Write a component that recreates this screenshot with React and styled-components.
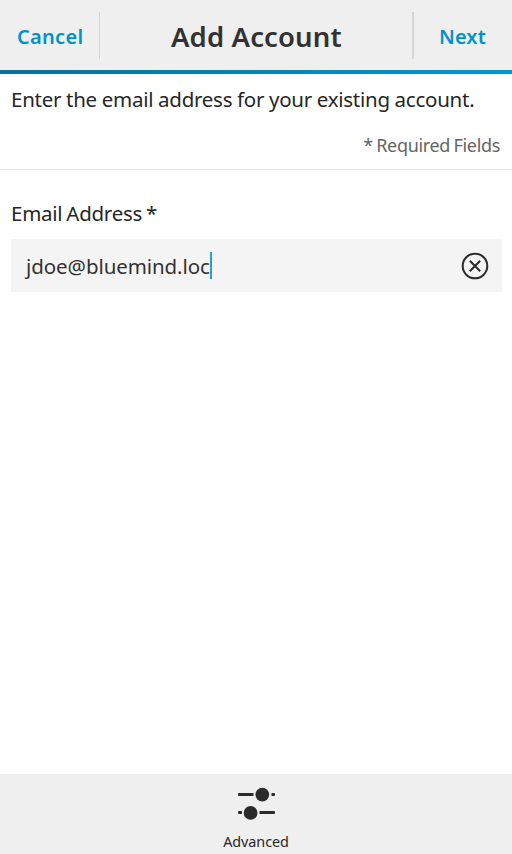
import React from "react";
import styled, { createGlobalStyle } from "styled-components";

const GlobalStyle = createGlobalStyle`
  * { box-sizing: border-box; }
  body {
    margin: 0;
    background: #fff;
    color: #262626;
    font-family: "Noto Sans", "Open Sans", sans-serif;
  }
`;

const Screen = styled.div`
  display: flex;
  flex-direction: column;
  height: 854px;
  width: 512px;
  overflow: hidden;
`;

const TitleBar = styled.header`
  display: grid;
  grid-template-columns: 99px 1px 312px 2px 98px;
  align-items: center;
  height: 70px;
  background: #efefef;
`;

const Divider = styled.span`
  height: 47px;
  background: #d5d5d5;
`;

const BarButton = styled.button`
  border: 0;
  padding: 4px 0 0 ${(p) => p.$inset}px;
  background: none;
  color: #0092cc;
  font: 600 20px/28px "Noto Sans", sans-serif;
  letter-spacing: ${(p) => p.$spacing}px;
  text-align: left;
  white-space: nowrap;
`;

const Title = styled.h1`
  margin: 0;
  padding: 4px 0 0 71px;
  color: #323232;
  font-size: 27.5px;
  font-weight: 600;
  line-height: 36px;
  letter-spacing: 0.12px;
  white-space: nowrap;
`;

const Accent = styled.div`
  height: 4px;
  background: linear-gradient(90deg, #087099, #0098d4);
`;

const Intro = styled.section`
  height: 96px;
  padding: 10px 12px 0 11px;
  border-bottom: 1px solid #e2e2e2;
`;

const Message = styled.p`
  margin: 0;
  font-size: 20.5px;
  line-height: 30px;
  letter-spacing: -0.25px;
  word-spacing: -0.3px;
  white-space: nowrap;
`;

const Required = styled.p`
  margin: 18px 0 0;
  color: #646464;
  font-size: 18px;
  line-height: 26px;
  letter-spacing: -0.34px;
  word-spacing: -0.8px;
  text-align: right;
`;

const Form = styled.main`
  flex: 1;
  padding: 28px 10px 0 11px;
`;

const Label = styled.label`
  display: block;
  height: 41px;
  font-size: 20.5px;
  line-height: 30px;
  letter-spacing: -0.27px;
  word-spacing: -1px;
`;

const Field = styled.div`
  display: flex;
  align-items: center;
  height: 53px;
  padding: 0 13px 0 15px;
  background: #f4f4f4;
`;

const Value = styled.span`
  color: #323232;
  font-size: 20.5px;
  line-height: 30px;
  letter-spacing: -0.08px;
`;

const Caret = styled.span`
  width: 2px;
  height: 27px;
  background: #2a9fd2;
`;

const ClearButton = styled.button`
  display: flex;
  margin-left: auto;
  padding: 0;
  border: 0;
  background: none;
`;

const ActionBar = styled.footer`
  height: 80px;
  background: #efefef;
`;

const Action = styled.button`
  display: flex;
  flex-direction: column;
  align-items: center;
  width: 100%;
  padding: 12px 0 0;
  border: 0;
  background: none;
  color: #262626;
  font: 14.4px/20px "Noto Sans", sans-serif;
`;

const ActionLabel = styled.span`
  margin-top: 10px;
  letter-spacing: -0.08px;
`;

function ClearIcon() {
  return (
    <svg width="28" height="28" viewBox="0 0 28 28" fill="none" stroke="#2b2b2b">
      <circle cx="14" cy="14" r="12.3" strokeWidth="2" />
      <path d="M8.8 8.8 19.2 19.2M19.2 8.8 8.8 19.2" strokeWidth="2" />
    </svg>
  );
}

function SlidersIcon() {
  return (
    <svg width="36" height="36" viewBox="0 0 36 36" fill="#2b2b2b" overflow="visible">
      <path d="M1 7h14.5v3H1a1 1 0 0 1-1-1V8a1 1 0 0 1 1-1ZM33.5 7H36a1 1 0 0 1 1 1v1a1 1 0 0 1-1 1h-2.5Z" />
      <circle cx="24.3" cy="8.6" r="6.9" />
      <path d="M1 25h3v3H1a1 1 0 0 1-1-1v-1a1 1 0 0 1 1-1ZM21.5 25H36a1 1 0 0 1 1 1v1a1 1 0 0 1-1 1H21.5Z" />
      <circle cx="12.6" cy="26.9" r="6.9" />
    </svg>
  );
}

export default function App() {
  return (
    <Screen>
      <GlobalStyle />
      <TitleBar>
        <BarButton $inset={17} $spacing={0.3}>Cancel</BarButton>
        <Divider />
        <Title>Add Account</Title>
        <Divider />
        <BarButton $inset={25} $spacing={0.1}>Next</BarButton>
      </TitleBar>
      <Accent />
      <Intro>
        <Message>Enter the email address for your existing account.</Message>
        <Required>* Required Fields</Required>
      </Intro>
      <Form>
        <Label>Email Address *</Label>
        <Field>
          <Value>jdoe@bluemind.loc</Value>
          <Caret />
          <ClearButton aria-label="Clear">
            <ClearIcon />
          </ClearButton>
        </Field>
      </Form>
      <ActionBar>
        <Action>
          <SlidersIcon />
          <ActionLabel>Advanced</ActionLabel>
        </Action>
      </ActionBar>
    </Screen>
  );
}
